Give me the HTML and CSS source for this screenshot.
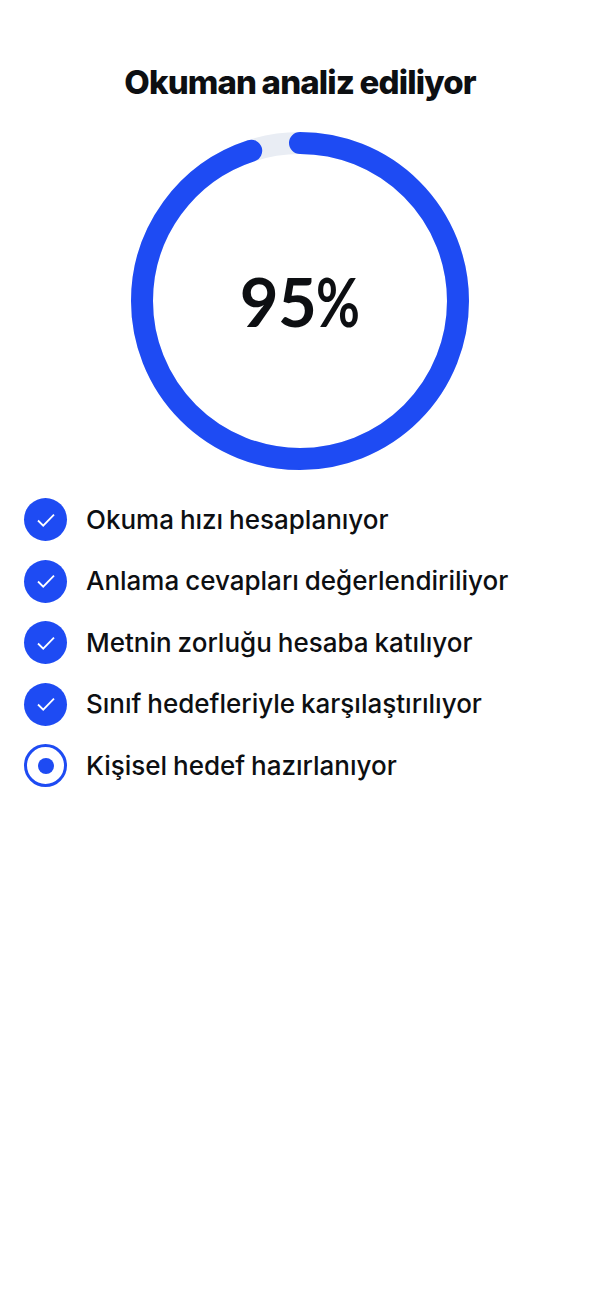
FILE: index.html
```html
<!DOCTYPE html>
<html lang="tr">
<head>
    <meta charset="UTF-8">
    <title>Okuman analiz ediliyor</title>
    <link rel="stylesheet" href="styles.css">
</head>
<body>
<div class="wrap">
    <h1 class="title">Okuman analiz ediliyor</h1>
    <div class="ring">
        <svg width="338" height="338" viewBox="0 0 338 338">
            <circle class="ring-bg" cx="169" cy="169" r="158"/>
            <circle class="ring-bar" cx="169" cy="169" r="158" pathLength="100" transform="rotate(-90 169 169)"/>
        </svg>
        <div class="percent">95<span class="sign">%</span></div>
    </div>
    <ul class="steps">
        <li class="step">
            <span class="dot"><svg width="20" height="20" viewBox="0 0 20 20"><path d="M2 10.5l5.2 5.2L18 4.6"/></svg></span>
            <span>Okuma hızı hesaplanıyor</span>
        </li>
        <li class="step">
            <span class="dot"><svg width="20" height="20" viewBox="0 0 20 20"><path d="M2 10.5l5.2 5.2L18 4.6"/></svg></span>
            <span>Anlama cevapları değerlendiriliyor</span>
        </li>
        <li class="step">
            <span class="dot"><svg width="20" height="20" viewBox="0 0 20 20"><path d="M2 10.5l5.2 5.2L18 4.6"/></svg></span>
            <span>Metnin zorluğu hesaba katılıyor</span>
        </li>
        <li class="step">
            <span class="dot"><svg width="20" height="20" viewBox="0 0 20 20"><path d="M2 10.5l5.2 5.2L18 4.6"/></svg></span>
            <span>Sınıf hedefleriyle karşılaştırılıyor</span>
        </li>
        <li class="step">
            <span class="dot current"><i class="inner"></i></span>
            <span>Kişisel hedef hazırlanıyor</span>
        </li>
    </ul>
</div>
</body>
</html>
```

FILE: styles.css
```css
body{
    margin: 0;
    padding: 0;
    background: #fff;
    color: #0d0f12;
    font-family: Inter, "Liberation Sans", sans-serif;
}
.wrap{
    width: 600px;
    height: 1298px;
    box-sizing: border-box;
    padding: 62px 24px 0;
}
.title{
    margin: 0;
    font-size: 33px;
    line-height: 40px;
    font-weight: 800;
    letter-spacing: -0.85px;
    word-spacing: -1px;
    text-align: center;
}
.ring{
    width: 338px;
    height: 338px;
    margin: 30px auto 0;
    position: relative;
}
.ring svg{
    display: block;
}
.ring-bg{
    fill: none;
    stroke: #e9edf4;
    stroke-width: 22;
}
.ring-bar{
    fill: none;
    stroke: #1e4bf3;
    stroke-width: 22;
    stroke-linecap: round;
    stroke-dasharray: 95 100;
}
.percent{
    position: absolute;
    left: 0;
    right: 0;
    top: 125px;
    text-align: center;
    font-family: Lato, sans-serif;
    font-size: 67px;
    line-height: 88px;
    font-weight: 700;
    letter-spacing: -0.5px;
}
.sign{
    display: inline-block;
    letter-spacing: 0;
    margin-right: -11px;
    transform: scaleX(0.8);
    transform-origin: left center;
}
.steps{
    list-style-type: none;
    margin: 28px 0 0;
    padding: 0 0 0 0.3px;
    display: flex;
    flex-direction: column;
    gap: 18.5px;
}
.step{
    display: flex;
    align-items: center;
    gap: 18.7px;
    height: 43px;
    font-size: 26px;
    line-height: 42px;
    font-weight: 500;
    word-spacing: -1px;
}
.dot{
    width: 43px;
    height: 43px;
    flex: none;
    box-sizing: border-box;
    border-radius: 50%;
    background: #1e4bf3;
    display: flex;
    align-items: center;
    justify-content: center;
}
.dot path{
    fill: none;
    stroke: #fff;
    stroke-width: 1.8;
}
.current{
    background: #fff;
    border: 3px solid #1e4bf3;
}
.inner{
    width: 16px;
    height: 16px;
    border-radius: 50%;
    background: #1e4bf3;
}
```
